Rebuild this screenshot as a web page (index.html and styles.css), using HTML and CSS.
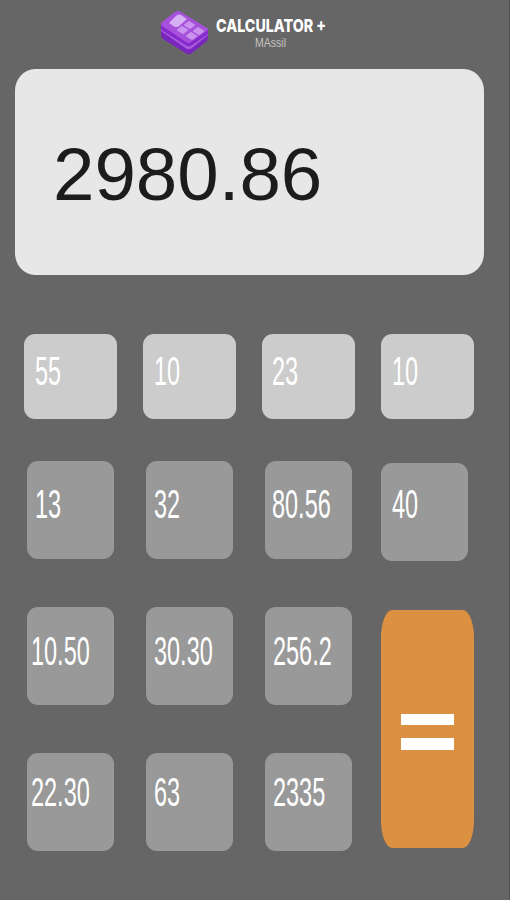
FILE: index.html
```html
<!DOCTYPE html>
<html lang="en">
<head>
    <meta charset="UTF-8">
    <meta name="viewport" content="width=device-width, initial-scale=1.0">
    <title>Calculator +</title>
    <link rel="stylesheet" href="styles.css">
</head>
<body>
    <div class="calculator">
        <header class="brand">
            <svg class="logo" viewBox="0 0 50 46" width="50" height="46">
                <path d="M1 20 L1 26 Q1 28 3 30 L27 45 Q30 46 32 44 L47 32 Q48 31 48 24 Z" fill="#7926bd"/>
                <path d="M1 18 L1 22 L27 40 Q30 41 32 39 L48 26 L48 22 Z" fill="#a95add"/>
                <path d="M1 14 L1 19 Q1 21 3 22 L27 37 Q30 38 32 36 L48 25 L48 20 Z" fill="#8429cb"/>
                <path d="M2 13 L15 3 Q18 1 21 3 L47 19 Q49 20 47 22 L31 33 Q29 35 26 33 L2 17 Q0 15 2 13 Z" fill="#a650dc"/>
                <path d="M9 14 L17 6 Q19 5 21 6 L27 10 L18 18 L15 18 Z" fill="#d5b0f2"/>
                <path d="M25 16 L29 13 L34 16 L30 19 Z M34 22 L38 19 L43 22 L39 25 Z M18 21 L22 18 L27 21 L23 24 Z M27 27 L31 24 L36 27 L32 30 Z" fill="#cb93ee" stroke="#cb93ee" stroke-width="2" stroke-linejoin="round"/>
            </svg>
            <svg class="brand-text" viewBox="0 0 114 40" width="114" height="40">
                <text class="brand-name" x="1" y="18" textLength="110" lengthAdjust="spacingAndGlyphs">CALCULATOR +</text>
                <text class="brand-author" x="40" y="33" textLength="31" lengthAdjust="spacingAndGlyphs">MAssil</text>
            </svg>
        </header>

        <div class="display">2980.86</div>

        <div class="keys">
            <button class="key light"><span>55</span></button>
            <button class="key light"><span>10</span></button>
            <button class="key light nudge"><span>23</span></button>
            <button class="key light"><span>10</span></button>

            <button class="key"><span>13</span></button>
            <button class="key"><span>32</span></button>
            <button class="key tight"><span>80.56</span></button>
            <button class="key last"><span>40</span></button>

            <button class="key wide middle"><span>10.50</span></button>
            <button class="key middle"><span>30.30</span></button>
            <button class="key middle"><span>256.2</span></button>
            <button class="equals" aria-label="equals"><i></i><i></i></button>

            <button class="key wide bottom"><span>22.30</span></button>
            <button class="key bottom"><span>63</span></button>
            <button class="key bottom"><span>2335</span></button>
        </div>
    </div>
</body>
</html>
```
FILE: styles.css
```css
* {
    box-sizing: border-box;
}
body {
    margin: 0;
    background-color: #fff;
    font-family: "Liberation Sans", Arial, sans-serif;
}
.calculator {
    width: 510px;
    height: 900px;
    background-color: #666;
    border-right: 1px solid #505050;
    overflow: hidden;
}
.brand {
    display: flex;
    height: 68.5px;
    padding: 9px 0 0 160px;
}
.brand-text {
    margin: 5px 0 0 5px;
    overflow: visible;
}
.brand-name {
    font: 800 17.5px Inter, sans-serif;
    fill: #fff;
}
.brand-author {
    font: 12.5px "Liberation Sans", sans-serif;
    fill: #c4c4c4;
}
.display {
    width: 469.5px;
    height: 206.5px;
    margin-left: 14.5px;
    padding: 66px 0 0 38.5px;
    border-radius: 20px / 22px;
    background-color: #e7e7e7;
    color: #1c1c1c;
    font-size: 74.5px;
    line-height: 80px;
}
.keys {
    display: grid;
    grid-template-columns: repeat(4, 93px);
    grid-template-rows: 85px 98.5px 98.5px 98.5px;
    column-gap: 26px;
    row-gap: 47.5px;
    margin: 58.5px 0 0 24.4px;
}
button {
    border: none;
    padding: 0;
    font-family: inherit;
}
.key {
    display: flex;
    align-items: flex-start;
    width: 86.5px;
    height: 98px;
    margin: -5px 0 0 3px;
    padding: 22.5px 0 0 8px;
    border-radius: 11px;
    background-color: #999;
    color: #fff;
    font-size: 40px;
    line-height: 40px;
}
.key span {
    transform: scaleX(0.587);
    transform-origin: 0 0;
}
.key.light {
    width: 92.5px;
    height: 85.5px;
    margin: 0;
    padding: 17px 0 0 11px;
    background-color: #ccc;
}
.key.light.nudge {
    padding-left: 9.5px;
}
.key.tight {
    padding-left: 6.5px;
}
.key.wide {
    padding-left: 3.5px;
}
.key.middle {
    padding-top: 24px;
}
.key.bottom {
    padding-top: 19px;
}
.key.last {
    margin: -3px 0 0;
    padding: 20.5px 0 0 10.5px;
}
.equals {
    display: flex;
    flex-direction: column;
    align-items: center;
    gap: 13px;
    grid-column: 4;
    grid-row: 3 / 5;
    width: 92.5px;
    height: 237.5px;
    margin-top: -2px;
    padding-top: 103.5px;
    border-radius: 11px / 28px;
    background-color: #dc9042;
}
.equals i {
    width: 53px;
    height: 11.5px;
    background-color: #fff;
}
```
